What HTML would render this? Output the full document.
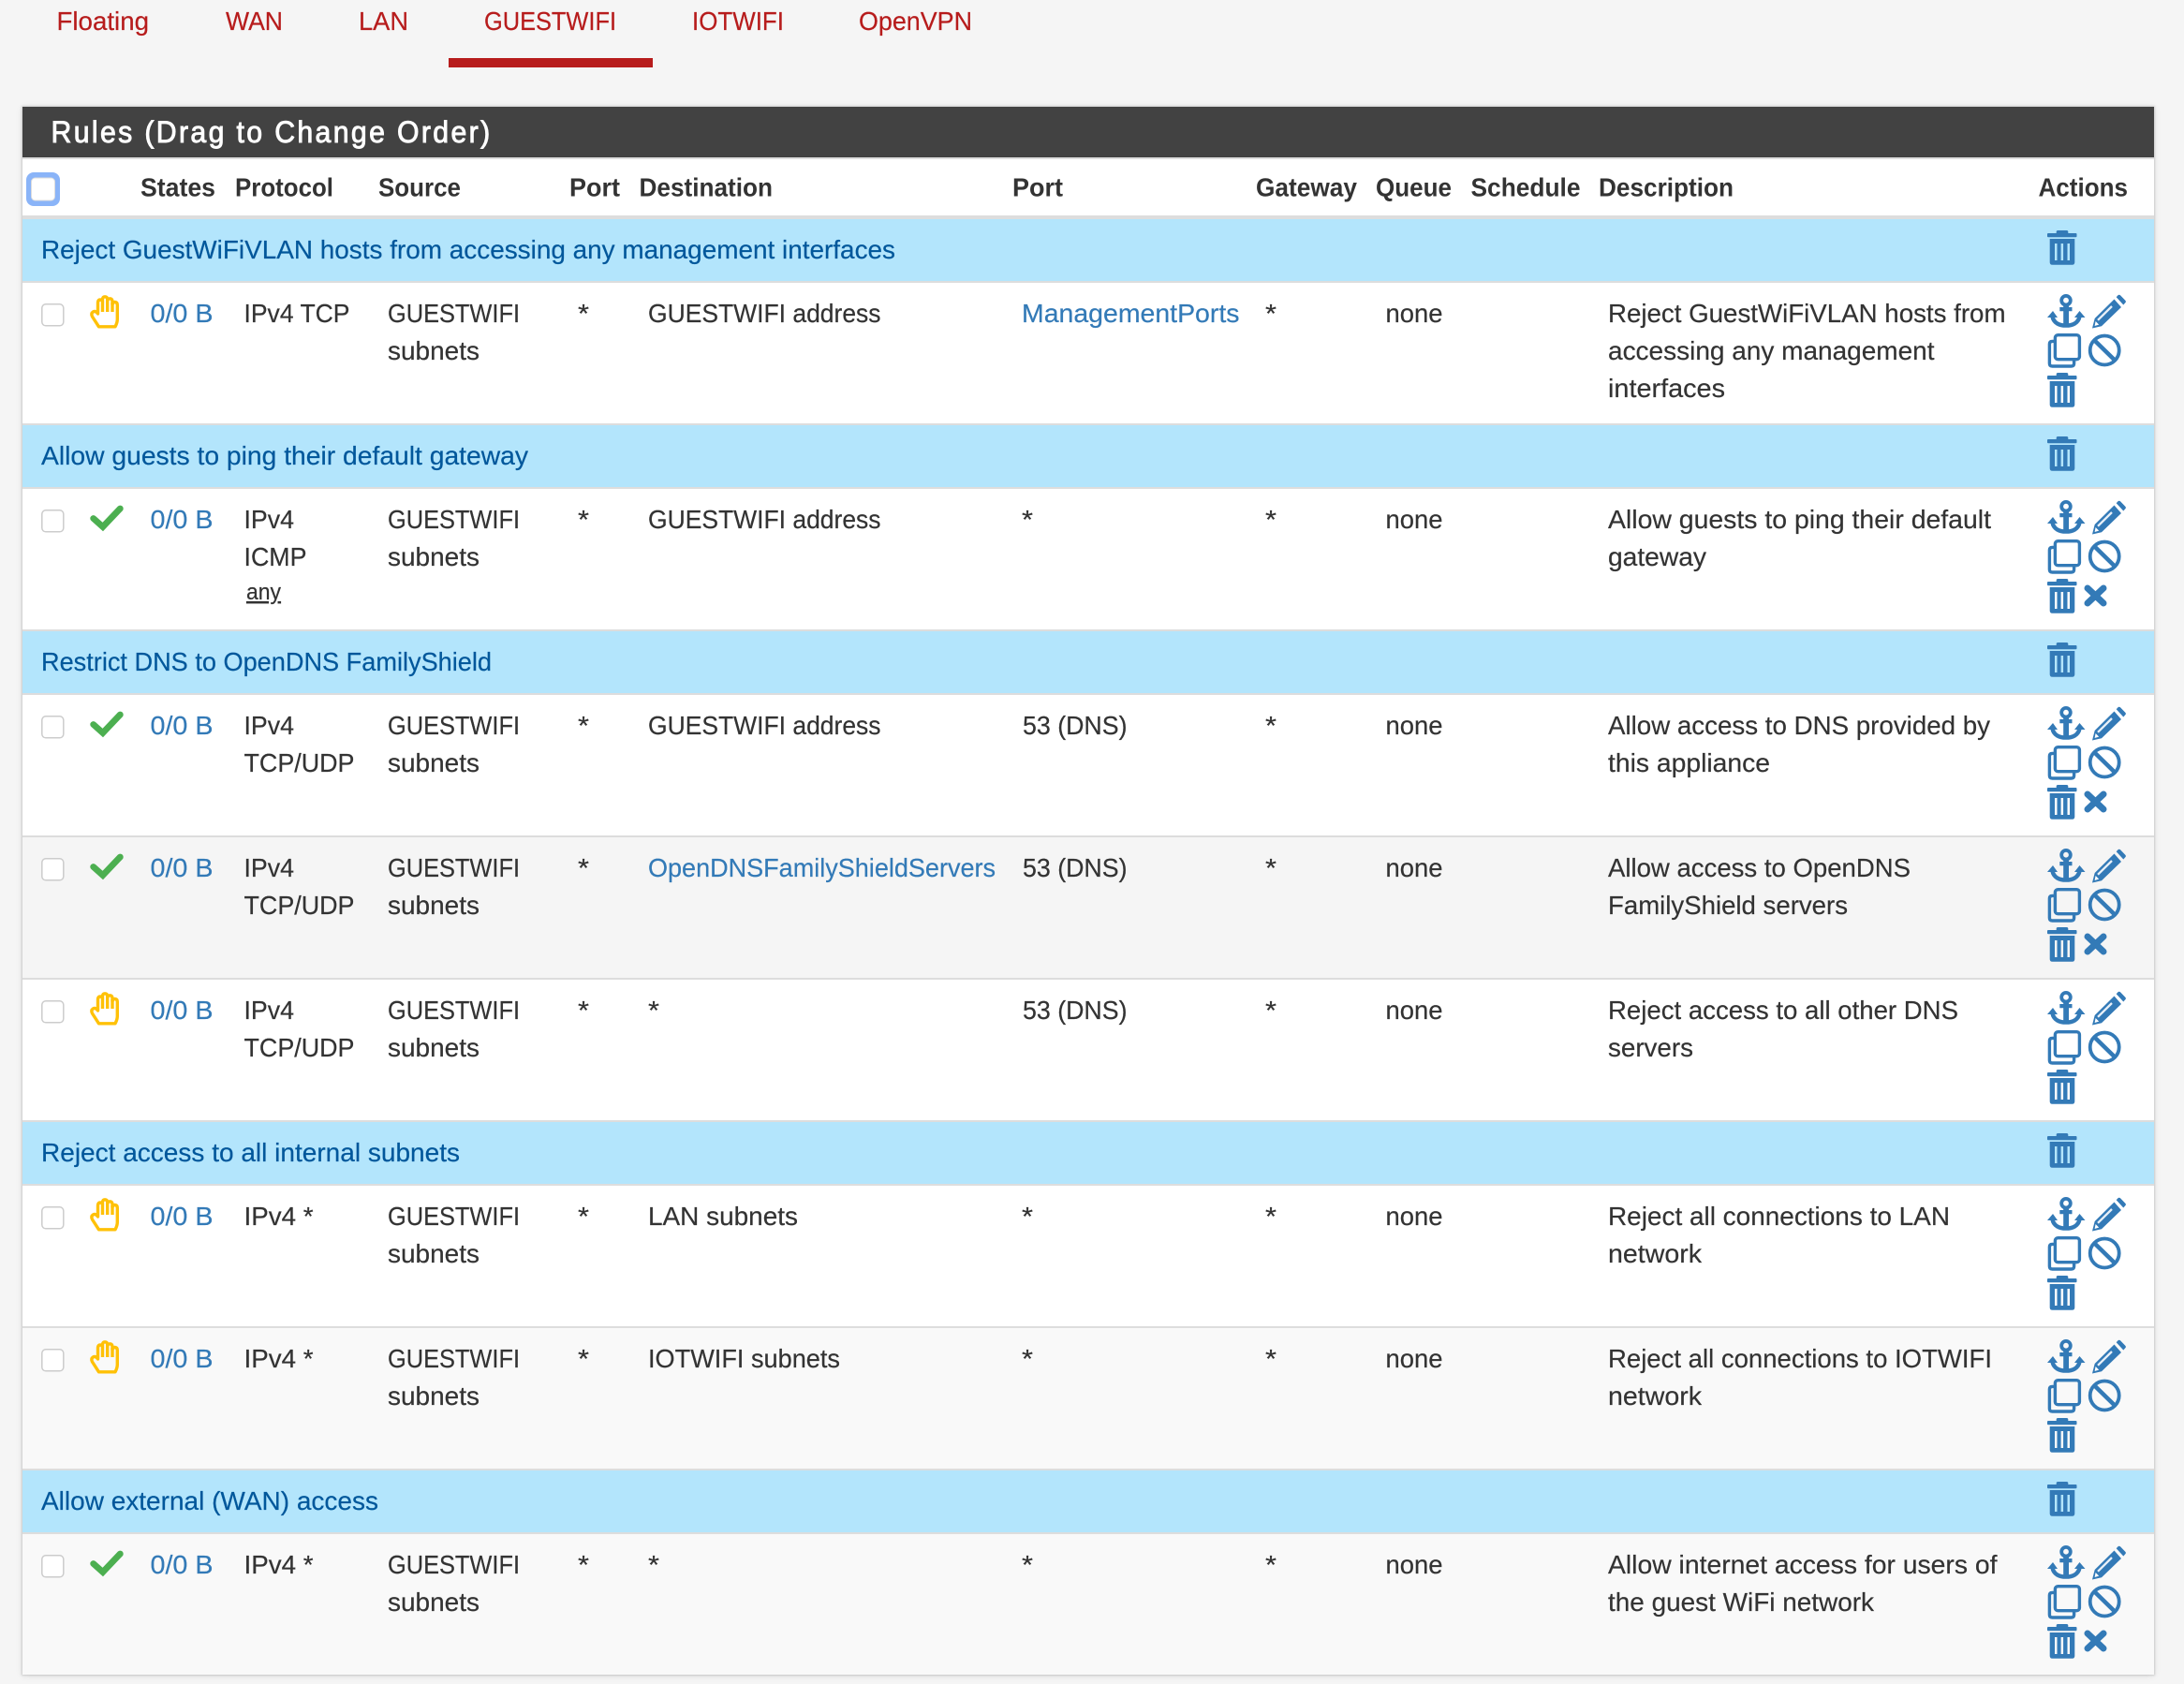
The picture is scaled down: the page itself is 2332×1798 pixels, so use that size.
<!DOCTYPE html>
<html lang="en">
<head>
<meta charset="utf-8">
<title>Rules</title>
<style>
html,body{margin:0;padding:0;background:#f5f5f5;width:2332px;height:1798px;overflow:hidden}
#panel{position:absolute;left:24px;top:114px;width:2276px;height:1674px;background:#fff;box-shadow:0 0 2px 1px rgba(0,0,0,.13),0 1px 7px rgba(0,0,0,.10)}
svg{position:absolute;left:0;top:0}
text{font-family:"Liberation Sans",sans-serif;font-size:28px;fill:#333;stroke:#333;stroke-width:.2px}
.tab{fill:#b71c1c;stroke:#b71c1c}
.th{font-weight:700;fill:#333;stroke:none}
.sep{fill:#01579b;stroke:#01579b}
.a{fill:#337ab7;stroke:#337ab7}
.t{fill:#fff;font-size:32px;stroke:#fff;stroke-width:.9px;letter-spacing:2.5px}
.any{font-size:24px}
</style>
</head>
<body>
<div id="panel"></div>
<svg width="2332" height="1798" viewBox="0 0 2332 1798" xmlns="http://www.w3.org/2000/svg">
<defs>
<g id="trash"><path fill="#337ab7" fill-rule="evenodd" d="M9.7 1.5Q9.7 0 11.5 0H20.5Q22.3 0 22.3 1.5V3H30.5Q31.5 3 31.5 4V6.3Q31.5 7.3 30.5 7.3H1Q0 7.3 0 6.3V4Q0 3 1 3H9.7ZM2.7 9H29.3V34Q29.3 36.8 26.5 36.8H5.5Q2.7 36.8 2.7 34ZM8 14V32H10.5V14ZM14.6 14V32H17.1V14ZM21.5 14V32H24V14Z"/></g>
<g id="anchor"><circle cx="20" cy="6.7" r="4.8" fill="none" stroke="#337ab7" stroke-width="3.8"/><path d="M17.2 11H23V33H17.2ZM13.3 14H26.5V18.3H13.3Z" fill="#337ab7"/><path d="M5.5 24C7 31 13 33.6 20 33.6C27 33.6 33 31 34.5 24" fill="none" stroke="#337ab7" stroke-width="4.4"/><path d="M0 25L6 18L11 25ZM40.5 25L34.5 18L29 25Z" fill="#337ab7"/></g>
<g id="pencil"><path fill="#337ab7" d="M23.5 5.5L31 14L10 34.2L0 36.5L2.7 26ZM25.7 3.2L27.5 1.3Q28.7 .2 30 1.3L35.3 6.7Q36.5 8 35.3 9.3L33.3 11.5Z"/><path d="M6 27.8L21 13" stroke="#e8f0f8" stroke-width="2.3"/><path d="M3.6 29L7.2 32.6L2.6 34Z" fill="#fff"/></g>
<g id="copy" fill="none" stroke="#337ab7" stroke-width="3.4"><path d="M7 8.4H5.4Q2.4 8.4 2.4 11.4V32Q2.4 35 5.4 35H25.6Q28.6 35 28.6 32V29"/><rect x="8.4" y="1.7" width="26" height="26" rx="3"/></g>
<g id="ban" fill="none" stroke="#337ab7"><circle cx="18.2" cy="18" r="15.5" stroke-width="3.8"/><path d="M7.5 7.5L29 28.5" stroke-width="4.5"/></g>
<g id="x"><path d="M4 4L21 20M21 4L4 20" stroke="#337ab7" stroke-width="7" stroke-linecap="round" fill="none"/></g>
<g id="check"><path d="M3.7 14.5L13.8 23.5L32.3 4" fill="none" stroke="#4caf50" stroke-width="6.8" stroke-linecap="round"/></g>
<g id="hand" fill="none" stroke="#ffc107" stroke-width="3.4" stroke-linejoin="round"><path d="M9.5 33.8L2.5 23Q.8 19.5 3.6 17.8Q6.3 16.5 8.5 20V8Q8.8 5 11 5Q13 5 13.5 7V4Q14 1.8 16 1.8Q18.2 1.8 18.7 4V6Q19.2 3.8 21.3 3.8Q23.6 3.8 24 6.5V10Q24.5 7.5 26.7 7.5Q29.3 7.8 29.3 10.5V26Q29.3 29.5 27 33.8Z"/><path d="M13.5 7V18M18.7 5V18M24 8V18"/></g>
<g id="cb"><rect x=".8" y=".8" width="23" height="23" rx="4" fill="#fff" stroke="#ccc" stroke-width="1.5"/></g>
</defs>

<!-- tabs -->
<text class="tab" x="60.5" y="32" textLength="98.5" lengthAdjust="spacingAndGlyphs">Floating</text>
<text class="tab" x="241" y="32" textLength="61" lengthAdjust="spacingAndGlyphs">WAN</text>
<text class="tab" x="383" y="32" textLength="53" lengthAdjust="spacingAndGlyphs">LAN</text>
<text class="tab" x="517" y="32" textLength="141" lengthAdjust="spacingAndGlyphs">GUESTWIFI</text>
<text class="tab" x="739" y="32" textLength="98" lengthAdjust="spacingAndGlyphs">IOTWIFI</text>
<text class="tab" x="917" y="32" textLength="121" lengthAdjust="spacingAndGlyphs">OpenVPN</text>
<rect x="479" y="62" width="218" height="10" fill="#b71c1c"/>

<!-- panel heading -->
<rect x="24" y="114" width="2276" height="54" fill="#424242"/>
<rect x="24" y="168" width="2276" height="2" fill="#ddd"/>
<text class="t" x="54.5" y="152" textLength="471" lengthAdjust="spacingAndGlyphs">Rules (Drag to Change Order)</text>

<!-- table head -->
<rect x="28" y="184" width="36" height="36" rx="8" fill="#8ab4f8"/>
<rect x="33.5" y="190" width="25" height="24" rx="4" fill="#fff" stroke="#ddd" stroke-width="1"/>
<text class="th" x="150" y="209.5" textLength="80" lengthAdjust="spacingAndGlyphs">States</text>
<text class="th" x="251" y="209.5" textLength="105" lengthAdjust="spacingAndGlyphs">Protocol</text>
<text class="th" x="404" y="209.5" textLength="88" lengthAdjust="spacingAndGlyphs">Source</text>
<text class="th" x="608" y="209.5" textLength="54" lengthAdjust="spacingAndGlyphs">Port</text>
<text class="th" x="682.5" y="209.5" textLength="142.5" lengthAdjust="spacingAndGlyphs">Destination</text>
<text class="th" x="1081" y="209.5" textLength="54" lengthAdjust="spacingAndGlyphs">Port</text>
<text class="th" x="1341" y="209.5" textLength="108" lengthAdjust="spacingAndGlyphs">Gateway</text>
<text class="th" x="1469" y="209.5" textLength="81" lengthAdjust="spacingAndGlyphs">Queue</text>
<text class="th" x="1570.5" y="209.5" textLength="117" lengthAdjust="spacingAndGlyphs">Schedule</text>
<text class="th" x="1707" y="209.5" textLength="144" lengthAdjust="spacingAndGlyphs">Description</text>
<text class="th" x="2176.5" y="209.5" textLength="95.5" lengthAdjust="spacingAndGlyphs">Actions</text>
<rect x="24" y="230" width="2276" height="4" fill="#ddd"/>

<!-- borders -->
<g fill="#ddd">
<rect x="24" y="300" width="2276" height="2"/><rect x="24" y="452" width="2276" height="2"/>
<rect x="24" y="520" width="2276" height="2"/><rect x="24" y="672" width="2276" height="2"/>
<rect x="24" y="740" width="2276" height="2"/><rect x="24" y="892" width="2276" height="2"/>
<rect x="24" y="1044" width="2276" height="2"/><rect x="24" y="1196" width="2276" height="2"/>
<rect x="24" y="1264" width="2276" height="2"/><rect x="24" y="1416" width="2276" height="2"/>
<rect x="24" y="1568" width="2276" height="2"/><rect x="24" y="1636" width="2276" height="2"/>
</g>

<!-- row tints -->
<rect x="24" y="894" width="2276" height="150" fill="#f5f5f5"/>
<rect x="24" y="1418" width="2276" height="150" fill="#f9f9f9"/>
<rect x="24" y="1638" width="2276" height="150" fill="#f9f9f9"/>

<!-- separators -->
<g fill="#b3e5fc">
<rect x="24" y="234" width="2276" height="66"/>
<rect x="24" y="454" width="2276" height="66"/>
<rect x="24" y="674" width="2276" height="66"/>
<rect x="24" y="1198" width="2276" height="66"/>
<rect x="24" y="1570" width="2276" height="66"/>
</g>
<text class="sep" x="44" y="276" textLength="912" lengthAdjust="spacingAndGlyphs">Reject GuestWiFiVLAN hosts from accessing any management interfaces</text>
<text class="sep" x="44" y="496" textLength="520" lengthAdjust="spacingAndGlyphs">Allow guests to ping their default gateway</text>
<text class="sep" x="44" y="716" textLength="481" lengthAdjust="spacingAndGlyphs">Restrict DNS to OpenDNS FamilyShield</text>
<text class="sep" x="44" y="1240" textLength="447" lengthAdjust="spacingAndGlyphs">Reject access to all internal subnets</text>
<text class="sep" x="44" y="1612" textLength="360" lengthAdjust="spacingAndGlyphs">Allow external (WAN) access</text>
<use href="#trash" x="2186" y="246"/>
<use href="#trash" x="2186" y="466"/>
<use href="#trash" x="2186" y="686"/>
<use href="#trash" x="2186" y="1210"/>
<use href="#trash" x="2186" y="1582"/>

<!-- row 1 -->
<g transform="translate(0,302)">
<use href="#cb" x="44" y="22"/><use href="#hand" x="96" y="13"/>
<text class="a" x="160.5" y="42" textLength="67" lengthAdjust="spacingAndGlyphs">0/0 B</text>
<text x="260.5" y="42" textLength="113" lengthAdjust="spacingAndGlyphs">IPv4 TCP</text>
<text x="414" y="42" textLength="141" lengthAdjust="spacingAndGlyphs">GUESTWIFI</text>
<text x="414" y="82" textLength="98" lengthAdjust="spacingAndGlyphs">subnets</text>
<text x="617" y="42" textLength="12" lengthAdjust="spacingAndGlyphs">*</text>
<text x="692" y="42" textLength="248.5" lengthAdjust="spacingAndGlyphs">GUESTWIFI address</text>
<text class="a" x="1091" y="42" textLength="232.5" lengthAdjust="spacingAndGlyphs">ManagementPorts</text>
<text x="1351" y="42" textLength="12" lengthAdjust="spacingAndGlyphs">*</text>
<text x="1479.5" y="42" textLength="61" lengthAdjust="spacingAndGlyphs">none</text>
<text x="1717" y="42" textLength="424.5" lengthAdjust="spacingAndGlyphs">Reject GuestWiFiVLAN hosts from</text>
<text x="1717" y="82" textLength="348.5" lengthAdjust="spacingAndGlyphs">accessing any management</text>
<text x="1717" y="122" textLength="125" lengthAdjust="spacingAndGlyphs">interfaces</text>
<use href="#anchor" x="2186" y="12"/><use href="#pencil" x="2234" y="12"/><use href="#copy" x="2186" y="54"/><use href="#ban" x="2229" y="54"/><use href="#trash" x="2186" y="96"/>
</g>

<!-- row 2 -->
<g transform="translate(0,522)">
<use href="#cb" x="44" y="22"/><use href="#check" x="96" y="17"/>
<text class="a" x="160.5" y="42" textLength="67" lengthAdjust="spacingAndGlyphs">0/0 B</text>
<text x="260.5" y="42" textLength="53.5" lengthAdjust="spacingAndGlyphs">IPv4</text>
<text x="260.5" y="82" textLength="67" lengthAdjust="spacingAndGlyphs">ICMP</text>
<text class="any" x="263" y="118" textLength="37" lengthAdjust="spacingAndGlyphs" text-decoration="underline">any</text>
<text x="414" y="42" textLength="141" lengthAdjust="spacingAndGlyphs">GUESTWIFI</text>
<text x="414" y="82" textLength="98" lengthAdjust="spacingAndGlyphs">subnets</text>
<text x="617" y="42" textLength="12" lengthAdjust="spacingAndGlyphs">*</text>
<text x="692" y="42" textLength="248.5" lengthAdjust="spacingAndGlyphs">GUESTWIFI address</text>
<text x="1091" y="42" textLength="12" lengthAdjust="spacingAndGlyphs">*</text>
<text x="1351" y="42" textLength="12" lengthAdjust="spacingAndGlyphs">*</text>
<text x="1479.5" y="42" textLength="61" lengthAdjust="spacingAndGlyphs">none</text>
<text x="1717" y="42" textLength="409" lengthAdjust="spacingAndGlyphs">Allow guests to ping their default</text>
<text x="1717" y="82" textLength="105" lengthAdjust="spacingAndGlyphs">gateway</text>
<use href="#anchor" x="2186" y="12"/><use href="#pencil" x="2234" y="12"/><use href="#copy" x="2186" y="54"/><use href="#ban" x="2229" y="54"/><use href="#trash" x="2186" y="96"/><use href="#x" x="2225" y="102"/>
</g>

<!-- row 3 -->
<g transform="translate(0,742)">
<use href="#cb" x="44" y="22"/><use href="#check" x="96" y="17"/>
<text class="a" x="160.5" y="42" textLength="67" lengthAdjust="spacingAndGlyphs">0/0 B</text>
<text x="260.5" y="42" textLength="53.5" lengthAdjust="spacingAndGlyphs">IPv4</text>
<text x="260.5" y="82" textLength="118" lengthAdjust="spacingAndGlyphs">TCP/UDP</text>
<text x="414" y="42" textLength="141" lengthAdjust="spacingAndGlyphs">GUESTWIFI</text>
<text x="414" y="82" textLength="98" lengthAdjust="spacingAndGlyphs">subnets</text>
<text x="617" y="42" textLength="12" lengthAdjust="spacingAndGlyphs">*</text>
<text x="692" y="42" textLength="248.5" lengthAdjust="spacingAndGlyphs">GUESTWIFI address</text>
<text x="1092" y="42" textLength="111.5" lengthAdjust="spacingAndGlyphs">53 (DNS)</text>
<text x="1351" y="42" textLength="12" lengthAdjust="spacingAndGlyphs">*</text>
<text x="1479.5" y="42" textLength="61" lengthAdjust="spacingAndGlyphs">none</text>
<text x="1717" y="42" textLength="408" lengthAdjust="spacingAndGlyphs">Allow access to DNS provided by</text>
<text x="1717" y="82" textLength="173" lengthAdjust="spacingAndGlyphs">this appliance</text>
<use href="#anchor" x="2186" y="12"/><use href="#pencil" x="2234" y="12"/><use href="#copy" x="2186" y="54"/><use href="#ban" x="2229" y="54"/><use href="#trash" x="2186" y="96"/><use href="#x" x="2225" y="102"/>
</g>

<!-- row 4 -->
<g transform="translate(0,894)">
<use href="#cb" x="44" y="22"/><use href="#check" x="96" y="17"/>
<text class="a" x="160.5" y="42" textLength="67" lengthAdjust="spacingAndGlyphs">0/0 B</text>
<text x="260.5" y="42" textLength="53.5" lengthAdjust="spacingAndGlyphs">IPv4</text>
<text x="260.5" y="82" textLength="118" lengthAdjust="spacingAndGlyphs">TCP/UDP</text>
<text x="414" y="42" textLength="141" lengthAdjust="spacingAndGlyphs">GUESTWIFI</text>
<text x="414" y="82" textLength="98" lengthAdjust="spacingAndGlyphs">subnets</text>
<text x="617" y="42" textLength="12" lengthAdjust="spacingAndGlyphs">*</text>
<text class="a" x="692" y="42" textLength="371" lengthAdjust="spacingAndGlyphs">OpenDNSFamilyShieldServers</text>
<text x="1092" y="42" textLength="111.5" lengthAdjust="spacingAndGlyphs">53 (DNS)</text>
<text x="1351" y="42" textLength="12" lengthAdjust="spacingAndGlyphs">*</text>
<text x="1479.5" y="42" textLength="61" lengthAdjust="spacingAndGlyphs">none</text>
<text x="1717" y="42" textLength="323" lengthAdjust="spacingAndGlyphs">Allow access to OpenDNS</text>
<text x="1717" y="82" textLength="256" lengthAdjust="spacingAndGlyphs">FamilyShield servers</text>
<use href="#anchor" x="2186" y="12"/><use href="#pencil" x="2234" y="12"/><use href="#copy" x="2186" y="54"/><use href="#ban" x="2229" y="54"/><use href="#trash" x="2186" y="96"/><use href="#x" x="2225" y="102"/>
</g>

<!-- row 5 -->
<g transform="translate(0,1046)">
<use href="#cb" x="44" y="22"/><use href="#hand" x="96" y="13"/>
<text class="a" x="160.5" y="42" textLength="67" lengthAdjust="spacingAndGlyphs">0/0 B</text>
<text x="260.5" y="42" textLength="53.5" lengthAdjust="spacingAndGlyphs">IPv4</text>
<text x="260.5" y="82" textLength="118" lengthAdjust="spacingAndGlyphs">TCP/UDP</text>
<text x="414" y="42" textLength="141" lengthAdjust="spacingAndGlyphs">GUESTWIFI</text>
<text x="414" y="82" textLength="98" lengthAdjust="spacingAndGlyphs">subnets</text>
<text x="617" y="42" textLength="12" lengthAdjust="spacingAndGlyphs">*</text>
<text x="692" y="42" textLength="12" lengthAdjust="spacingAndGlyphs">*</text>
<text x="1092" y="42" textLength="111.5" lengthAdjust="spacingAndGlyphs">53 (DNS)</text>
<text x="1351" y="42" textLength="12" lengthAdjust="spacingAndGlyphs">*</text>
<text x="1479.5" y="42" textLength="61" lengthAdjust="spacingAndGlyphs">none</text>
<text x="1717" y="42" textLength="374" lengthAdjust="spacingAndGlyphs">Reject access to all other DNS</text>
<text x="1717" y="82" textLength="91" lengthAdjust="spacingAndGlyphs">servers</text>
<use href="#anchor" x="2186" y="12"/><use href="#pencil" x="2234" y="12"/><use href="#copy" x="2186" y="54"/><use href="#ban" x="2229" y="54"/><use href="#trash" x="2186" y="96"/>
</g>

<!-- row 6 -->
<g transform="translate(0,1266)">
<use href="#cb" x="44" y="22"/><use href="#hand" x="96" y="13"/>
<text class="a" x="160.5" y="42" textLength="67" lengthAdjust="spacingAndGlyphs">0/0 B</text>
<text x="260.5" y="42" textLength="74" lengthAdjust="spacingAndGlyphs">IPv4 *</text>
<text x="414" y="42" textLength="141" lengthAdjust="spacingAndGlyphs">GUESTWIFI</text>
<text x="414" y="82" textLength="98" lengthAdjust="spacingAndGlyphs">subnets</text>
<text x="617" y="42" textLength="12" lengthAdjust="spacingAndGlyphs">*</text>
<text x="692" y="42" textLength="160" lengthAdjust="spacingAndGlyphs">LAN subnets</text>
<text x="1091" y="42" textLength="12" lengthAdjust="spacingAndGlyphs">*</text>
<text x="1351" y="42" textLength="12" lengthAdjust="spacingAndGlyphs">*</text>
<text x="1479.5" y="42" textLength="61" lengthAdjust="spacingAndGlyphs">none</text>
<text x="1717" y="42" textLength="365" lengthAdjust="spacingAndGlyphs">Reject all connections to LAN</text>
<text x="1717" y="82" textLength="100" lengthAdjust="spacingAndGlyphs">network</text>
<use href="#anchor" x="2186" y="12"/><use href="#pencil" x="2234" y="12"/><use href="#copy" x="2186" y="54"/><use href="#ban" x="2229" y="54"/><use href="#trash" x="2186" y="96"/>
</g>

<!-- row 7 -->
<g transform="translate(0,1418)">
<use href="#cb" x="44" y="22"/><use href="#hand" x="96" y="13"/>
<text class="a" x="160.5" y="42" textLength="67" lengthAdjust="spacingAndGlyphs">0/0 B</text>
<text x="260.5" y="42" textLength="74" lengthAdjust="spacingAndGlyphs">IPv4 *</text>
<text x="414" y="42" textLength="141" lengthAdjust="spacingAndGlyphs">GUESTWIFI</text>
<text x="414" y="82" textLength="98" lengthAdjust="spacingAndGlyphs">subnets</text>
<text x="617" y="42" textLength="12" lengthAdjust="spacingAndGlyphs">*</text>
<text x="692" y="42" textLength="205" lengthAdjust="spacingAndGlyphs">IOTWIFI subnets</text>
<text x="1091" y="42" textLength="12" lengthAdjust="spacingAndGlyphs">*</text>
<text x="1351" y="42" textLength="12" lengthAdjust="spacingAndGlyphs">*</text>
<text x="1479.5" y="42" textLength="61" lengthAdjust="spacingAndGlyphs">none</text>
<text x="1717" y="42" textLength="410" lengthAdjust="spacingAndGlyphs">Reject all connections to IOTWIFI</text>
<text x="1717" y="82" textLength="100" lengthAdjust="spacingAndGlyphs">network</text>
<use href="#anchor" x="2186" y="12"/><use href="#pencil" x="2234" y="12"/><use href="#copy" x="2186" y="54"/><use href="#ban" x="2229" y="54"/><use href="#trash" x="2186" y="96"/>
</g>

<!-- row 8 -->
<g transform="translate(0,1638)">
<use href="#cb" x="44" y="22"/><use href="#check" x="96" y="17"/>
<text class="a" x="160.5" y="42" textLength="67" lengthAdjust="spacingAndGlyphs">0/0 B</text>
<text x="260.5" y="42" textLength="74" lengthAdjust="spacingAndGlyphs">IPv4 *</text>
<text x="414" y="42" textLength="141" lengthAdjust="spacingAndGlyphs">GUESTWIFI</text>
<text x="414" y="82" textLength="98" lengthAdjust="spacingAndGlyphs">subnets</text>
<text x="617" y="42" textLength="12" lengthAdjust="spacingAndGlyphs">*</text>
<text x="692" y="42" textLength="12" lengthAdjust="spacingAndGlyphs">*</text>
<text x="1091" y="42" textLength="12" lengthAdjust="spacingAndGlyphs">*</text>
<text x="1351" y="42" textLength="12" lengthAdjust="spacingAndGlyphs">*</text>
<text x="1479.5" y="42" textLength="61" lengthAdjust="spacingAndGlyphs">none</text>
<text x="1717" y="42" textLength="415.5" lengthAdjust="spacingAndGlyphs">Allow internet access for users of</text>
<text x="1717" y="82" textLength="284" lengthAdjust="spacingAndGlyphs">the guest WiFi network</text>
<use href="#anchor" x="2186" y="12"/><use href="#pencil" x="2234" y="12"/><use href="#copy" x="2186" y="54"/><use href="#ban" x="2229" y="54"/><use href="#trash" x="2186" y="96"/><use href="#x" x="2225" y="102"/>
</g>
</svg>
</body>
</html>
